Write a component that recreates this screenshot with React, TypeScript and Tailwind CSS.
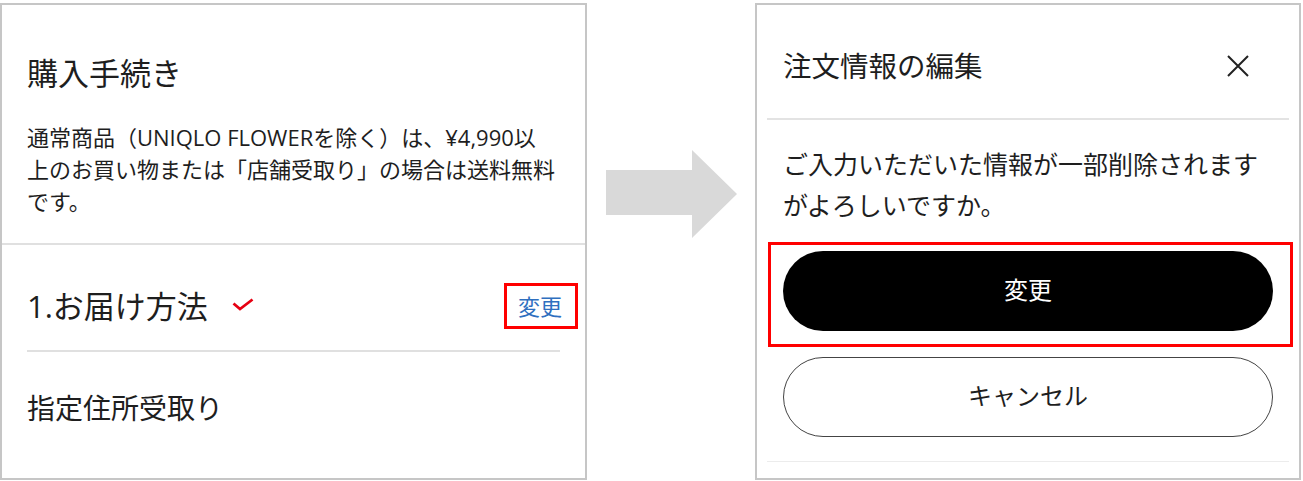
const CheckMark = () => (
  <svg width="22" height="13" viewBox="0 0 22 13" className="ml-[24px] mt-[-4px]">
    <polyline points="1.5,5.5 8,11 20.5,1.5" fill="none" stroke="#e60012" strokeWidth="2.8" />
  </svg>
);

const CloseIcon = () => (
  <svg width="22" height="22" viewBox="0 0 22 22">
    <path d="M1 1 L21 21 M21 1 L1 21" stroke="#222" strokeWidth="2" />
  </svg>
);

const BigArrow = () => (
  <svg width="131" height="88" viewBox="0 0 131 88" className="ml-[19px] mt-[150px] shrink-0">
    <polygon points="0,20 86,20 86,0 131,44 86,88 86,65 0,65" fill="#d9d9d9" />
  </svg>
);

export default function App() {
  return (
    <div className="flex items-start w-[1303px] h-[481px] bg-white text-[#1e1e1e] font-['Open_Sans','Noto_Sans_CJK_JP',sans-serif]">
      {/* 購入手続き */}
      <div className="mt-[3px] w-[587px] h-[477px] shrink-0 border-2 border-[#c6c6c6]">
        <section className="px-[25px] pt-[46px] pb-[26px] border-b-2 border-[#e0e0e0]">
          <h1 className="text-[31px] leading-[45px]">購入手続き</h1>
          <p className="mt-[25px] text-[22px] leading-[32px] whitespace-nowrap">
            通常商品（UNIQLO FLOWERを除く）は、¥4,990以
            <br />
            上のお買い物または「店舗受取り」の場合は送料無料
            <br />
            です。
          </p>
        </section>

        <div className="px-[25px]">
          <div className="flex items-center justify-between pt-[38px] pb-[21px] border-b-2 border-[#e0e0e0]">
            <div className="flex items-center">
              <h2 className="text-[31px] leading-[46px]">1.お届け方法</h2>
              <CheckMark />
            </div>
            <a className="relative mr-[-2px] text-[22px] leading-[46px] text-[#2f6fbf] cursor-pointer">
              変更
              <span className="absolute -left-[14px] -right-[16px] top-0 bottom-0 border-[3px] border-[#ff0000]" />
            </a>
          </div>
          <p className="pt-[36px] text-[28px] leading-[40px]">指定住所受取り</p>
        </div>
      </div>

      <BigArrow />

      {/* 注文情報の編集 */}
      <div className="ml-[18px] mt-[3px] w-[546px] h-[477px] shrink-0 border-2 border-[#c6c6c6]">
        <div className="mx-[10px]">
          <div className="flex items-center justify-between pl-[16px] pr-[40px] pt-[40px] pb-[31px] border-b-2 border-[#e3e3e3]">
            <h2 className="text-[28.5px] leading-[42px]">注文情報の編集</h2>
            <CloseIcon />
          </div>

          <div className="px-[16px] border-b border-[#ececec] pb-[24px]">
            <p className="mt-[24px] text-[25px] leading-[41px]">
              ご入力いただいた情報が一部削除されますがよろしいですか。
            </p>
            <div className="relative mt-[25px]">
              <button className="w-full h-[80px] rounded-full bg-black text-white text-[24px] leading-none pb-[3px]">変更</button>
              <span className="absolute -left-[15px] -right-[20px] -top-[9px] -bottom-[16px] border-[3px] border-[#ff0000]" />
            </div>
            <button className="mt-[26px] w-full h-[80px] rounded-full border-[1.5px] border-[#444] bg-white text-[24px] leading-none pb-[3px]">
              キャンセル
            </button>
          </div>
        </div>
      </div>
    </div>
  );
}
